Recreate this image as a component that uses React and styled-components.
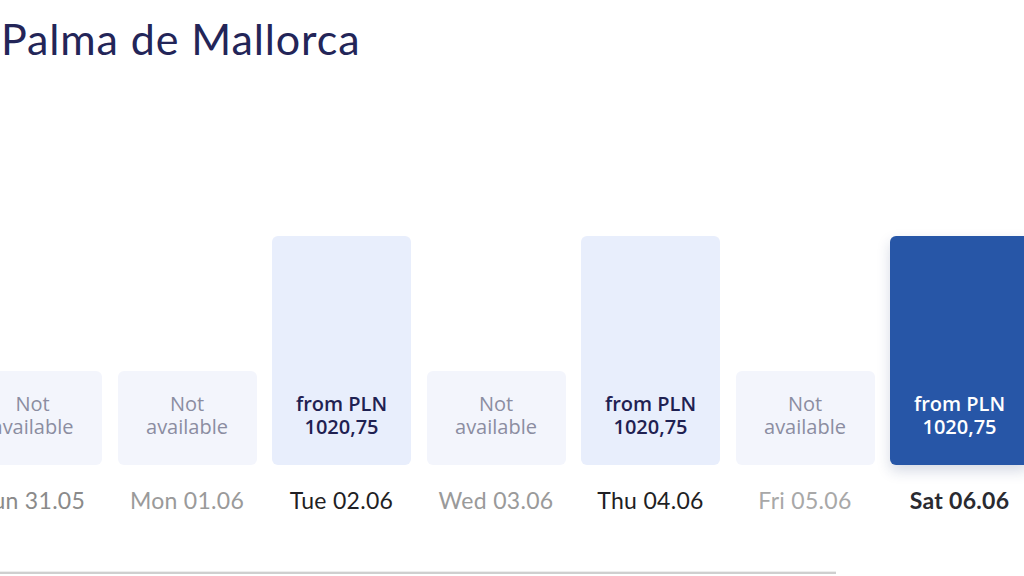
import React from 'react';
import styled, { createGlobalStyle } from 'styled-components';

const GlobalStyle = createGlobalStyle`
	html, body {
		margin: 0;
		padding: 0;
		background: #ffffff;
		font-family: 'Inter', 'Noto Sans', sans-serif;
		overflow: hidden;
	}
`;

const Page = styled.div`
	width: 1024px;
	height: 576px;
	overflow: hidden;
	display: flex;
	flex-direction: column;
`;

const Title = styled.h1`
	margin: 14px 0 0 1px;
	font-family: 'Lato', sans-serif;
	font-weight: 400;
	font-size: 43px;
	line-height: 50px;
	color: #232558;
	letter-spacing: 0.9px;
`;

const Chart = styled.div`
	margin-top: 172px;
	margin-left: -37px;
	display: flex;
	gap: 15.5px;
	align-items: flex-end;
`;

const Column = styled.div`
	flex: 0 0 139px;
	display: flex;
	flex-direction: column;
	align-items: center;
`;

const Bar = styled.div`
	width: 100%;
	height: ${(p) => (p.$available ? 229 : 94)}px;
	border-radius: 6px;
	box-sizing: border-box;
	padding-bottom: 27px;
	display: flex;
	flex-direction: column;
	justify-content: flex-end;
	align-items: center;
	text-align: center;
	font-family: 'Open Sans', sans-serif;
	font-size: 20px;
	line-height: 23px;
	font-weight: ${(p) => (p.$available ? 600 : 400)};
	background: ${(p) => (p.$selected ? '#2756a7' : p.$available ? '#e8eefc' : '#f3f5fc')};
	color: ${(p) => (p.$selected ? '#ffffff' : p.$available ? '#1f2152' : '#8b8da1')};
	box-shadow: ${(p) => (p.$selected ? '0 6px 14px rgba(30, 50, 110, 0.18)' : 'none')};
`;

const DateLabel = styled.div`
	margin-top: 20px;
	font-family: 'Lato', sans-serif;
	font-size: 23px;
	line-height: 30px;
	letter-spacing: 0.3px;
	white-space: nowrap;
	font-weight: ${(p) => (p.$selected ? 700 : 400)};
	color: ${(p) => p.$color};
`;

const Track = styled.div`
	margin-top: 56px;
	width: 836px;
	height: 2px;
	background: #cfcfcf;
	border-top: 1px solid #eeeeee;
`;

const days = [
	{ label: 'Sun 31.05', available: false, color: '#8a8a8a' },
	{ label: 'Mon 01.06', available: false, color: '#9a9a9a' },
	{ label: 'Tue 02.06', available: true, color: '#1f1f24' },
	{ label: 'Wed 03.06', available: false, color: '#9a9a9a' },
	{ label: 'Thu 04.06', available: true, color: '#1f1f24' },
	{ label: 'Fri 05.06', available: false, color: '#a8a8a8' },
	{ label: 'Sat 06.06', available: true, selected: true, color: '#2a2a30' },
];

const App = () => {
	return (
		<Page>
			<GlobalStyle />
			<Title>Palma de Mallorca</Title>
			<Chart>
				{days.map((day) => (
					<Column key={day.label}>
						<Bar $available={day.available} $selected={day.selected}>
							{day.available ? (
								<>
									<span>from PLN</span>
									<span>1020,75</span>
								</>
							) : (
								<>
									<span>Not</span>
									<span>available</span>
								</>
							)}
						</Bar>
						<DateLabel $selected={day.selected} $color={day.color}>
							{day.label}
						</DateLabel>
					</Column>
				))}
			</Chart>
			<Track />
		</Page>
	);
};

export default App;
